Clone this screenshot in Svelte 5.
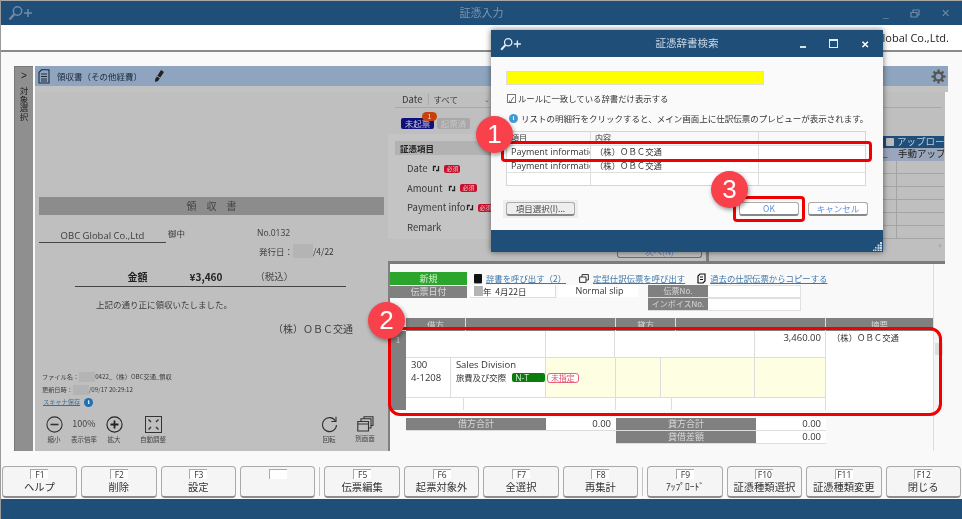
<script>
  const fkeys = [
    { key: 'F1', label: 'ヘルプ' },
    { key: 'F2', label: '削除' },
    { key: 'F3', label: '設定' },
    { key: '', label: '', gapAfter: true },
    { key: 'F5', label: '伝票編集' },
    { key: 'F6', label: '起票対象外' },
    { key: 'F7', label: '全選択' },
    { key: 'F8', label: '再集計', gapAfter: true },
    { key: 'F9', label: 'ｱｯﾌﾟﾛｰﾄﾞ' },
    { key: 'F10', label: '証憑種類選択' },
    { key: 'F11', label: '証憑種類変更' },
    { key: 'F12', label: '閉じる' },
  ]

  const fields = [
    { name: 'Date', gap: 5 },
    { name: 'Amount', gap: 6 },
    { name: 'Payment info', gap: 0 },
    { name: 'Remark' },
  ]

  const gridRows = [0, 1, 2, 3, 4, 5]
</script>

{#snippet logo(size)}
  <svg class="logo" width={size * 1.75} height={size} viewBox="0 0 28 16" fill="none" stroke="currentColor">
    <circle cx="10.5" cy="6" r="4.2" stroke-width="1.5" />
    <path d="M7.5 9 L2.5 14.5" stroke-width="2.4" />
    <path d="M17 8 H25 M21 4 V12" stroke-width="1.5" />
  </svg>
{/snippet}

{#snippet cycle()}
  <svg class="cycle" width="8" height="7" viewBox="0 0 8 7" fill="none" stroke="#222" stroke-width="1.3">
    <path d="M1.5 6 V1.5 H4 M6.5 1 V5.5 H4" />
  </svg>
{/snippet}

<div class="app">
  <header class="titlebar">
    <span class="title-logo">{@render logo(16)}</span>
    <span class="title-text">証憑入力</span>
    <div class="winctl">
      <span>_</span>
      <svg width="10" height="9" viewBox="0 0 10 9" fill="none" stroke="#6f8ba6" stroke-width="1.2"><path d="M1 3.5 H7 V8 H1 Z M3 3.5 V1 H9 V6 H7" /></svg>
      <span class="x">✕</span>
    </div>
  </header>

  <div class="company">OBC Global Co.,Ltd.</div>

  <main class="main">
    <section class="panel">
      <aside class="rail">
        <span class="chev">&gt;</span>
        <span class="rail-text">対象選択</span>
      </aside>

      <div class="work">
        <div class="work-head">
          <svg width="12" height="15" viewBox="0 0 12 15" fill="none" stroke="#1c2a3a" stroke-width="1.1">
            <path d="M3.5 .8 H11 V14 H1 V3.5 Z M3 5 H9 M3 7.5 H9 M3 10 H9 M3 12 H9" />
          </svg>
          <span class="doc-name">領収書（その他経費）</span>
          <svg class="pencil" width="11" height="14" viewBox="0 0 11 14">
            <path d="M7 1 L10 3 L4 12 L1 13 L1.2 10 Z" fill="#222" />
            <path d="M3 7 L7 9.5" stroke="#8ea4bf" stroke-width="1" />
          </svg>
          <svg class="gear" width="15" height="15" viewBox="0 0 16 16">
            <circle cx="8" cy="8" r="4.2" fill="none" stroke="#555" stroke-width="2.4" />
            <path d="M8 .5 V3.5 M8 12.5 V15.5 M.5 8 H3.5 M12.5 8 H15.5 M2.7 2.7 L4.8 4.8 M11.2 11.2 L13.3 13.3 M13.3 2.7 L11.2 4.8 M4.8 11.2 L2.7 13.3" stroke="#555" stroke-width="2.4" />
          </svg>
        </div>
        <div class="work-strip"></div>

        <div class="split">
          <!-- scanned receipt -->
          <div class="receipt">
            <div class="receipt-title">領　収　書</div>
            <div class="receipt-to">
              <span class="to-name">OBC Global Co.,Ltd</span>
              <span class="to-suffix">御中</span>
              <span class="to-no">No.0132</span>
            </div>
            <div class="receipt-date">発行日：<i class="redact w20"></i>/4/22</div>
            <div class="amount">
              <b>金額</b><b>¥3,460</b><span>（税込）</span>
            </div>
            <p class="received">上記の通り正に領収いたしました。</p>
            <p class="issuer">（株）ＯＢＣ交通</p>
            <div class="fileinfo">
              <div>ファイル名：<i class="redact w16"></i>0422_（株）OBC交通_領収</div>
              <div>更新日時：<i class="redact w16"></i>/09/17 20:29:12</div>
              <div class="scan"><u>スキャナ保存</u> <span class="info small">i</span></div>
            </div>
            <div class="tools">
              <div class="tool">
                <svg width="17" height="17" viewBox="0 0 17 17" fill="none" stroke="#333" stroke-width="1.1"><circle cx="8.5" cy="8.5" r="7.6" /><path d="M4.5 8.5 H12.5" stroke-width="1.6" /></svg>
                <span>縮小</span>
              </div>
              <div class="tool rate"><em>100%</em><span>表示倍率</span></div>
              <div class="tool">
                <svg width="17" height="17" viewBox="0 0 17 17" fill="none" stroke="#222" stroke-width="1.1"><circle cx="8.5" cy="8.5" r="7.6" /><path d="M4.5 8.5 H12.5 M8.5 4.5 V12.5" stroke-width="1.8" /></svg>
                <span>拡大</span>
              </div>
              <div class="tool auto">
                <svg width="17" height="17" viewBox="0 0 17 17" fill="none" stroke="#333" stroke-width="1"><rect x=".5" y=".5" width="16" height="16" /><path d="M6 6 L3.500 3.500 M11 6 L13.500 3.500 M6 11 L3.500 13.500 M11 11 L13.500 13.500" stroke-width="1.4" /></svg>
                <span>自動調整</span>
              </div>
              <div class="tool rotate">
                <svg width="17" height="17" viewBox="0 0 17 17" fill="none" stroke="#333" stroke-width="1.1"><path d="M14.5 5 A7 7 0 1 0 15.5 9" /><path d="M15 .8 V5.5 H10.3" /></svg>
                <span>回転</span>
              </div>
              <div class="tool other">
                <svg width="17" height="16" viewBox="0 0 17 16" fill="none" stroke="#333" stroke-width="1.1"><path d="M.8 5.5 H11.5 V15 H.8 Z M.8 8 H11.5 M4 5.5 V2.8 H14 V12 H11.5 M7 2.8 V.8 H16 V9.5 H14" /></svg>
                <span>別画面</span>
              </div>
            </div>
          </div>

          <div class="right">
            <!-- upper area sits behind the dialog -->
            <div class="upper">
              <div class="filter">
                <span class="filter-label">Date</span>
                <span class="filter-sel">すべて</span>
                <span class="filter-arrow">⌄</span>
              </div>
              <div class="states">
                <span class="state on">未起票<b class="count">1</b></span>
                <span class="state off">起票済</span>
              </div>
              <div class="voucher">
                <div class="voucher-head">証憑項目</div>
                {#each fields as f}
                  <div class="field">
                    <span>{f.name}</span>
                    {#if f.gap !== undefined}
                      <span class="field-tags" style="margin-left: {f.gap}px">{@render cycle()}<b class="must">必須</b></span>
                    {/if}
                  </div>
                {/each}
              </div>
              <div class="next-row"><span class="next">次へ(N)</span><span class="next-split"></span></div>
              <div class="upload">
                <div class="up-head"><i class="up-drop"></i><span>アップロー</span></div>
                <div class="up-sel"><span>_</span><span>手動アップ</span></div>
                {#each gridRows as r}
                  <div class="up-row"><span></span><span></span></div>
                {/each}
                <div class="up-foot">›</div>
              </div>
            </div>

            <!-- journal slip -->
            <div class="lower">
              <div class="slip-top">
                <div class="slip-kind">
                  <div class="new">新規</div>
                  <div class="hd">伝票日付</div>
                </div>
                <div class="slip-mid">
                  <div class="links">
                    <span class="book"></span><a href="#dict">辞書を呼び出す（2）</a>
                    <svg width="10" height="9" viewBox="0 0 10 9" fill="none" stroke="#333" stroke-width="1"><path d="M.6 3 H7 V8.4 H.6 Z M3 3 V.6 H9.4 V6 H7" /></svg>
                    <a href="#teikei">定型仕訳伝票を呼び出す</a>
                    <svg width="9" height="11" viewBox="0 0 9 11" fill="none" stroke="#111" stroke-width="1.2"><path d="M3 1 H8 V8 L6 10 H1 V3 Z M3 4 H6 M3 6.5 H6" /></svg>
                    <a href="#copy">過去の仕訳伝票からコピーする</a>
                  </div>
                  <div class="slip-fields">
                    <div class="datebox"><i class="redact w9"></i>年&nbsp; 4月22日</div>
                    <div class="normal">Normal slip</div>
                    <div class="numbers">
                      <span class="hd">伝票No.</span><span class="val"></span>
                      <span class="hd">インボイスNo.</span><span class="val"></span>
                    </div>
                  </div>
                </div>
              </div>

              <div class="journal">
                <div class="j-head">
                  <span class="a">借方</span><span class="b"></span>
                  <span class="a">貸方</span><span class="b"></span>
                  <span class="c">摘要</span>
                </div>
                <div class="j-body">
                  <div class="j-no">1</div>
                  <div class="j-rows">
                    <div class="r1">
                      <span class="w140"></span><span class="w70"></span><span class="w140"></span>
                      <span class="w70 num">3,460.00</span>
                    </div>
                    <div class="r2">
                      <span class="code"><span>300</span><span>4-1208</span></span>
                      <span class="acct">
                        <span>Sales Division</span>
                        <span class="acct-line">旅費及び交際<b class="nt">N-T</b></span>
                      </span>
                      <span class="y w70"><b class="unset">未指定</b></span>
                      <span class="y w45"></span><span class="y w95"></span><span class="y w70"></span>
                    </div>
                    <div class="r3">
                      <span class="w58"></span><span class="w152"></span><span class="w57"></span><span class="w153"></span>
                    </div>
                  </div>
                  <div class="j-remark">（株）ＯＢＣ交通</div>
                  <div class="j-scroll"><span>⌃</span><i></i><span>⌄</span></div>
                </div>
              </div>

              <div class="totals">
                <div class="t-row">
                  <span class="hd t140">借方合計</span><span class="val t70">0.00</span>
                  <span class="hd t140">貸方合計</span><span class="val t70">0.00</span>
                </div>
                <div class="t-row second">
                  <span class="hd t140">貸借差額</span><span class="val t70">0.00</span>
                </div>
              </div>
            </div>
          </div>
        </div>
      </div>
    </section>
  </main>

  <nav class="fkeys">
    {#each fkeys as k}
      <button class="fkey">
        <span class="key-tag">{k.key}</span>
        <span class="key-label" class:narrow={k.key === 'F9'}>{k.label}</span>
      </button>
      {#if k.gapAfter}<i class="key-sep"></i>{/if}
    {/each}
  </nav>
  <footer class="statusbar"></footer>

  <!-- modal dialog over the window -->
  <div class="dialog">
    <div class="dlg-title">
      <span class="dlg-logo">{@render logo(14)}</span>
      <span class="dlg-text">証憑辞書検索</span>
      <div class="dlg-ctl">
        <span class="min"></span><span class="max"></span><span class="close">✕</span>
      </div>
    </div>
    <div class="dlg-body">
      <div class="yellow"></div>
      <label class="check"><span class="box">✓</span>ルールに一致している辞書だけ表示する</label>
      <div class="hint"><span class="info">i</span>リストの明細行をクリックすると、メイン画面上に仕訳伝票のプレビューが表示されます。</div>
      <div class="dict">
        <div class="dict-row head"><span>項目</span><span>内容</span><span></span></div>
        <div class="dict-row"><span class="clip">Payment information</span><span>（株）ＯＢＣ交通</span><span></span></div>
        <div class="dict-row"><span class="clip">Payment information</span><span>（株）ＯＢＣ交通</span><span></span></div>
        <div class="dict-row"><span></span><span></span><span></span></div>
      </div>
      <div class="dlg-actions">
        <div class="pick-wrap"><button class="btn pick">項目選択(I)...</button></div>
        <button class="btn act ok">OK</button>
        <button class="btn act">キャンセル</button>
      </div>
    </div>
    <div class="dlg-foot">
      <svg width="9" height="9" viewBox="0 0 9 9" fill="#c9d6e2"><path d="M7 0h2v2H7zM4.500 2.500h2v2h-2zM7 2.500h2v2H7zM2 5h1.500v1.500H2zM4.500 5h2v2h-2zM7 5h2v2H7zM0 7.500h1.500V9H0zM2 7.500h1.500V9H2zM4.500 7.500h2V9h-2zM7 7.500h2V9H7z" /></svg>
    </div>
  </div>

  <!-- annotations -->
  <i class="mark m1"></i>
  <i class="mark m2"></i>
  <i class="mark m3"></i>
  <span class="dot d1">1</span>
  <span class="dot d2">2</span>
  <span class="dot d3">3</span>
</div>

<style>
  :global(body) { margin: 0; }

  .app {
    position: relative;
    width: 962px;
    height: 519px;
    display: flex;
    flex-direction: column;
    overflow: hidden;
    background: #f9f9f9;
    color: #333;
    font-family: "Noto Sans CJK JP", "Noto Sans", sans-serif;
    font-size: 8.5px;
    line-height: 1.2;
    box-sizing: border-box;
    border-left: 1px solid #9a9a9a;
    filter: blur(0.3px);
  }

  /* window chrome */
  .titlebar {
    flex: none;
    height: 24px;
    border-top: 1px solid #a8a8a8;
    background: #1f4e79;
    display: grid;
    grid-template-columns: 1fr auto 1fr;
    align-items: center;
    color: #6f8ba6;
  }

  .title-logo { padding-left: 6px; display: flex; }
  .title-text { font-size: 11px; color: #7d96ae; }

  .winctl {
    justify-self: end;
    display: flex;
    align-items: center;
    gap: 21px;
    padding-right: 12px;
    font-size: 11px;
    color: #6f8ba6;
  }

  .company {
    flex: none;
    height: 25px;
    background: #fff;
    border-bottom: 2px solid #8a8a8a;
    display: flex;
    align-items: center;
    justify-content: flex-end;
    padding-right: 13px;
    font-size: 11px;
    color: #222;
    font-family: "Open Sans", sans-serif;
  }

  .main {
    flex: none;
    height: 413px;
    box-sizing: border-box;
    padding: 14px 14px 0 13px;
  }

  .panel {
    height: 385px;
    display: grid;
    grid-template-columns: 19px 1fr;
    gap: 2px;
  }

  .rail {
    background: #8f8f8f;
    border-left: 1px solid #777;
    border-top: 1px solid #777;
    display: flex;
    flex-direction: column;
    align-items: center;
    color: #222;
  }

  .chev { margin-top: 3px; font: 400 10px/12px "Liberation Sans", sans-serif; }

  .rail-text {
    margin-top: 5px;
    writing-mode: vertical-rl;
    font-size: 8.5px;
  }

  .work { display: flex; flex-direction: column; min-width: 0; }

  .work-head {
    flex: none;
    height: 20px;
    background: #8ea4bf;
    display: flex;
    align-items: center;
    padding-left: 3px;
    color: #1c2a3a;
  }

  .doc-name { margin-left: 7px; font-size: 8.5px; }
  .pencil { margin-left: 12px; }
  .gear { margin-left: auto; margin-right: 2px; }

  .work-strip { flex: none; height: 6px; background: #c2c2c2; }

  .split {
    flex: 1;
    display: grid;
    grid-template-columns: 353px 1fr;
    min-height: 0;
  }

  /* receipt preview */
  .receipt {
    background: #bfbfbf;
    border-right: 2px solid #808080;
    padding-top: 105px;
    display: flex;
    flex-direction: column;
    color: #3c3c3c;
    box-sizing: border-box;
    width: 355px;
  }

  .receipt-title {
    margin: 0 4px;
    height: 18px;
    background: #8c8c8c;
    text-align: center;
    line-height: 17px;
    font-size: 10px;
    color: #444;
  }

  .receipt-to {
    margin: 10px 0 0 4px;
    display: flex;
    align-items: flex-end;
    height: 18px;
  }

  .to-name {
    width: 127px;
    height: 18px;
    padding-top: 4px;
    border-bottom: 1px solid #444;
    box-sizing: border-box;
    text-align: center;
    font-size: 9.5px;
    line-height: 13px;
    font-family: "Open Sans", sans-serif;
  }

  .to-suffix { margin: 3px 0 0 2px; align-self: flex-start; font-size: 8.5px; }
  .to-no { margin: 3px 0 0 72px; align-self: flex-start; font-size: 8.5px; font-family: "Open Sans", sans-serif; }

  .receipt-date { margin: 0 0 0 224px; height: 16px; display: flex; align-items: center; font-size: 8.5px; }

  .redact { display: inline-block; height: 100%; min-height: 10px; background: #b4b4b4; }
  .w20 { width: 20px; height: 14px; }
  .w16 { width: 16px; height: 10px; }
  .w9 { width: 9px; height: 9px; }

  .amount {
    margin: 9px 0 0 40px;
    width: 271px;
    height: 19px;
    padding-top: 3px;
    border-bottom: 1px solid #444;
    display: flex;
    justify-content: center;
    gap: 42px;
    font-size: 10px;
    color: #222;
    box-sizing: border-box;
  }

  .amount span { color: #444; font-size: 9.5px; margin-left: -9px; }

  .received { margin: 12px 0 0 61px; font-size: 8.5px; }
  .issuer { margin: 14px 0 0 238px; font-size: 10px; }

  .fileinfo {
    margin: 36px 0 0 7px;
    font-size: 6.2px;
    line-height: 12.4px;
    color: #3a3a3a;
  }

  .fileinfo > div { display: flex; align-items: center; height: 12.4px; }
  .scan u { color: #3f6f98; }
  .scan { gap: 4px; margin-left: 1px; }

  .info {
    flex: none;
    width: 9px;
    height: 9px;
    border-radius: 50%;
    background: #3f9bd6;
    color: #fff;
    font: 700 7px/9px "Liberation Serif", serif;
    text-align: center;
  }

  .info.small { background: #1f6fb4; }

  .tools {
    margin: 8px 0 0 4px;
    display: flex;
    color: #444;
  }

  .tool {
    flex: none;
    display: flex;
    flex-direction: column;
    align-items: center;
    gap: 3px;
    width: 30px;
    font-size: 6.5px;
    white-space: nowrap;
  }

  .tool.rate { justify-content: flex-end; }
  .tool.rate em { font-style: normal; font-size: 9px; height: 17px; line-height: 16px; }
  .tool.auto { margin-left: 9px; }
  .tool.rotate { margin-left: 146px; }
  .tool.other { margin-left: 6px; }

  /* right column */
  .right { display: flex; flex-direction: column; min-width: 0; }

  .upper {
    position: relative;
    height: 172px;
    background: #bfbfbf;
    border-bottom: 3px solid #7c7c7c;
    box-sizing: border-box;
    padding: 0 0 0 7px;
    color: #3a3a3a;
    width: 557px;
  }

  .filter {
    display: flex;
    align-items: center;
    height: 16px;
    width: 547px;
    border-bottom: 1px solid #a9a9a9;
    padding-left: 7px;
    box-sizing: border-box;
    font-size: 9.5px;
  }

  .filter-sel {
    margin-left: 6px;
    font-size: 8.5px;
    border-left: 1px solid #a9a9a9;
    padding-left: 4px;
  }

  .filter-arrow { margin-left: 26px; font-size: 7px; color: #666; }

  .states { display: flex; gap: 3px; margin: 10px 0 0 6px; }

  .state {
    position: relative;
    width: 33px;
    height: 11px;
    line-height: 11px;
    text-align: center;
    font-size: 8.5px;
    border-radius: 2px;
  }

  .state.on { background: #10107a; color: #c8c8dc; }
  .state.off { background: #a8a8a8; color: #c6c6c6; }

  .count {
    position: absolute;
    top: -6px;
    right: -3px;
    width: 15px;
    height: 9px;
    border-radius: 5px;
    background: #c8400c;
    color: #eee;
    font-size: 6px;
    line-height: 9px;
    font-weight: 400;
  }

  .voucher {
    margin: 5px 0 0 -7px;
    width: 114px;
    height: 105px;
    background: #c4c4c4;
    padding: 7px 0 0 0;
    box-sizing: border-box;
  }

  .voucher-head {
    margin: 0 0 4px 7px;
    height: 14px;
    line-height: 14px;
    padding-left: 5px;
    background: #b2b2b2;
    font-weight: 700;
    font-size: 8.5px;
    color: #222;
  }

  .field {
    display: flex;
    align-items: center;
    height: 19.6px;
    padding-left: 19px;
    font-size: 9.5px;
    white-space: nowrap;
  }

  .field-tags { display: inline-flex; align-items: center; gap: 4px; }
  .cycle { flex: none; }

  .must {
    padding: 0 2px;
    border-radius: 2px;
    background: #c8102e;
    color: #e8c0c0;
    font-size: 6px;
    line-height: 8px;
    font-weight: 400;
  }

  .next-row {
    position: absolute;
    left: 0;
    right: 0;
    bottom: 0;
    height: 13px;
    display: flex;
  }

  .next {
    margin-left: 229px;
    width: 85px;
    height: 10px;
    border: 1px solid #6f6f6f;
    border-top: 0;
    border-radius: 0 0 3px 3px;
    text-align: center;
    color: #5a82b8;
    line-height: 7px;
    box-sizing: border-box;
  }

  .next-split { margin-left: 4px; width: 3px; background: #7c7c7c; }

  .upload {
    position: absolute;
    top: 44px;
    left: 495px;
    width: 61px;
    color: #222;
    font-size: 8.5px;
  }

  .up-head {
    display: flex;
    height: 12px;
    background: #1f4e79;
    color: #c0cedb;
    align-items: center;
    padding-left: 3px;
    gap: 3px;
    white-space: nowrap;
    overflow: hidden;
    font-size: 9.5px;
  }

  .up-drop { flex: none; width: 8px; height: 8px; background: #bbb; border-radius: 1px; }

  .up-sel, .up-row {
    display: grid;
    grid-template-columns: 13px 1fr;
    height: 13px;
    overflow: hidden;
    white-space: nowrap;
  }

  .up-sel { background: #9aa6bb; }
  .up-sel span + span { padding-left: 2px; font-size: 9.5px; }
  .up-row { border-bottom: 1px solid #a4a4a4; box-sizing: border-box; }
  .up-row span + span { border-left: 1px solid #a4a4a4; }
  .up-foot { height: 10px; text-align: right; padding-right: 3px; color: #888; line-height: 10px; }

  /* journal slip */
  .lower { flex: 1; padding-top: 8px; width: 546px; border-right: 1px solid #ddd; box-sizing: border-box; height: 186px; }

  .hd {
    display: flex;
    align-items: center;
    justify-content: center;
    background: #808080;
    color: #d8d8d8;
    box-sizing: border-box;
    font-size: 9px;
  }

  .val {
    display: flex;
    align-items: center;
    justify-content: flex-end;
    background: #fff;
    padding-right: 5px;
    box-sizing: border-box;
    color: #333;
    font-family: "Open Sans", sans-serif;
    font-size: 9.5px;
  }

  .slip-top { display: flex; margin-left: 2px; }

  .slip-kind { width: 77px; }
  .new { height: 13px; background: #2ca52c; color: #d5f0d5; text-align: center; line-height: 13px; font-size: 9px; }
  .slip-kind .hd { height: 12px; margin-top: 1px; }

  .slip-mid { margin-left: 7px; }

  .links {
    display: flex;
    align-items: center;
    height: 13px;
    gap: 4px;
    font-size: 8.4px;
    white-space: nowrap;
  }

  .links a { color: #3d77ab; margin-right: 8px; }
  .links a:first-of-type { margin-right: 9px; }
  .book { width: 8px; height: 9px; background: #111; border-radius: 1px; box-shadow: 0 1px 0 #999; }

  .slip-fields { display: flex; margin: 0 0 0 -4px; }

  .datebox {
    width: 86px;
    height: 13px;
    display: flex;
    align-items: center;
    background: #fff;
    border-right: 1px solid #ddd;
    border-bottom: 1px solid #ddd;
    padding-left: 4px;
    box-sizing: border-box;
    font-size: 8.5px;
  }

  .normal {
    width: 80px;
    margin-left: 2px;
    height: 12px;
    background: #fff;
    text-align: center;
    font-family: "Open Sans", sans-serif;
    font-size: 9px;
    line-height: 12px;
    padding-left: 3px;
    box-sizing: border-box;
  }

  .numbers {
    margin-left: 10px;
    display: grid;
    grid-template-columns: 60px 93px;
    grid-auto-rows: 13px;
  }

  .numbers .hd { border-bottom: 1px solid #ddd; font-size: 8px; white-space: nowrap; }
  .numbers .val { border: 1px solid #e0e0e0; border-left: 0; }

  .journal { margin: 7px 0 0 18px; }

  .j-head {
    display: grid;
    grid-template-columns: 60px 150px 60px 150px 108px;
    height: 12px;
  }

  .j-head span {
    background: #808080;
    color: #d8d8d8;
    border-right: 1px solid #ddd;
    text-align: center;
    font-size: 8.5px;
    line-height: 13px;
    height: 13px;
    overflow: hidden;
    box-sizing: border-box;
  }

  .j-body {
    position: relative;
    display: grid;
    grid-template-columns: 420px 108px 10px;
    margin-top: 1px;
    height: 79px;
    background: #fff;
  }

  .j-no {
    position: absolute;
    left: -16px;
    top: 0;
    bottom: 0;
    width: 16px;
    background: #808080;
    color: #ccc;
    font-size: 8px;
    text-align: center;
    padding-top: 4px;
    box-sizing: border-box;
  }

  .j-rows { display: flex; flex-direction: column; border-right: 1px solid #ddd; }
  .j-rows > div { display: flex; border-bottom: 1px solid #ddd; box-sizing: border-box; }
  .j-rows span { display: block; box-sizing: border-box; }
  .j-rows > div > span { border-right: 1px solid #ddd; }
  .j-rows > div > span:last-child { border-right: 0; }

  .r1 { height: 27px; }
  .r2 { height: 40px; }
  .r3 { height: 12px; border-bottom: 0 !important; }

  .w140 { width: 140px; }
  .w70 { width: 70px; }
  .w45 { width: 45px; }
  .w95 { width: 95px; }
  .w58 { width: 58px; }
  .w152 { width: 152px; }
  .w57 { width: 57px; }
  .w153 { width: 153px; }

  .num {
    text-align: right;
    padding: 1px 4px 0 0;
    font-family: "Open Sans", sans-serif;
    font-size: 9.5px;
  }

  .code, .acct {
    font-family: "Open Sans", "Noto Sans CJK JP", sans-serif;
    font-size: 9.5px;
    line-height: 13px;
    padding: 0 0 0 5px;
  }

  .code { width: 45px; }
  .acct { width: 95px; white-space: nowrap; }
  .acct-line { display: flex !important; align-items: center; font-family: "Noto Sans CJK JP", sans-serif; font-size: 8.4px; }

  .nt {
    margin-left: 6px;
    width: 33px;
    height: 9px;
    line-height: 9px;
    padding-left: 3px;
    box-sizing: border-box;
    border-radius: 2px;
    background: #0a7d0a;
    color: #d6ecd6;
    font-weight: 400;
    font-size: 8.5px;
    font-family: "Open Sans", sans-serif;
  }

  .y { background: #fefee2; }
  .unset {
    display: block;
    width: 32px;
    margin: 15px 0 0 1px;
    border: 1px solid #e8607a;
    border-radius: 3px;
    background: #fff;
    color: #e0506a;
    font-size: 8px;
    font-weight: 400;
    line-height: 8px;
    text-align: center;
    box-sizing: border-box;
  }

  .j-remark { padding: 1px 0 0 6px; font-size: 8.4px; }

  .j-scroll {
    display: flex;
    flex-direction: column;
    align-items: center;
    background: #f4f4f4;
    color: #aaa;
    font-size: 7px;
    line-height: 11px;
  }

  .j-scroll i { display: block; width: 8px; height: 12px; background: #ddd; margin-top: 1px; }
  .j-scroll span:last-child { margin-top: auto; }

  .totals { margin: 8px 0 0 18px; }
  .t-row { display: flex; height: 13px; }
  .t-row.second { margin-left: 210px; }
  .t140 { width: 140px; border-bottom: 1px solid #ddd; }
  .t70 { width: 70px; border-bottom: 1px solid #ddd; }

  /* function keys */
  .fkeys {
    flex: none;
    margin-top: 1px;
    height: 33px;
    display: flex;
    align-items: flex-start;
    gap: 4px;
    padding-left: 0.7px;
  }

  .fkey {
    flex: none;
    width: 75.450px;
    height: 32px;
    padding: 2px 0 0;
    display: flex;
    flex-direction: column;
    align-items: center;
    background: #f5f5f5;
    border: 1px solid #aaa;
    border-bottom: 2px solid #8c8c8c;
    border-radius: 4px;
    box-sizing: border-box;
    font-family: inherit;
    color: #333;
  }

  .key-tag {
    width: 18px;
    height: 10px;
    border-top: 1px solid #aaa;
    border-left: 1px solid #aaa;
    background: #fff;
    font-size: 8.5px;
    line-height: 9px;
    text-align: center;
    box-sizing: border-box;
    font-family: "Open Sans", sans-serif;
  }

  .key-label { font-size: 10.3px; line-height: 15px; white-space: nowrap; }
  .key-label.narrow { font-size: 9.5px; }

  .key-sep { flex: none; width: 1px; height: 29px; margin-top: 1px; background: #c4c4c4; }

  .statusbar { flex: 1; background: #1f4e79; }

  /* dialog */
  .dialog {
    position: absolute;
    left: 490px;
    top: 30px;
    width: 392px;
    height: 222px;
    display: flex;
    flex-direction: column;
    background: #fff;
    box-shadow: 0 0 6px rgba(0, 0, 0, 0.55);
  }

  .dlg-title {
    flex: none;
    height: 27px;
    background: #1f4e79;
    display: grid;
    grid-template-columns: 1fr auto 1fr;
    align-items: center;
    color: #e4ebf2;
  }

  .dlg-logo { padding-left: 8px; display: flex; }
  .dlg-text { font-size: 10.5px; color: #ccd8e3; }

  .dlg-ctl { justify-self: end; display: flex; align-items: center; gap: 23px; padding-right: 14px; color: #fff; }
  .min { width: 6px; height: 2px; background: #d8e0e8; margin-top: 6px; }
  .max { width: 7px; height: 6px; border: 1px solid #e6ecf2; border-top-width: 2px; }
  .close { font-size: 10px; font-weight: 700; }

  .dlg-body {
    flex: 1;
    background: #fafafa;
    padding: 14px 15px 0;
    display: flex;
    flex-direction: column;
    color: #333;
  }

  .yellow {
    width: 258px;
    height: 14px;
    background: #ffff00;
    border: 1px solid #ddd;
    box-sizing: border-box;
  }

  .check { display: flex; align-items: center; margin-top: 7px; font-size: 8.4px; height: 12px; }

  .box {
    width: 9px;
    height: 9px;
    border: 1px solid #777;
    margin: 0 2px 0 1px;
    font-size: 8px;
    line-height: 9px;
    text-align: center;
    box-sizing: border-box;
    background: #fff;
  }

  .hint {
    display: flex;
    align-items: center;
    gap: 3px;
    margin: 8px 0 0 3px;
    font-size: 8.5px;
    height: 12px;
    white-space: nowrap;
  }

  .dict { margin-top: 7px; width: 360px; border: 1px solid #d6d6d6; box-sizing: border-box; background: #fff; }

  .dict-row {
    display: grid;
    grid-template-columns: 84px 168px 1fr;
    height: 13.300px;
    border-top: 1px solid #e0e0e0;
    box-sizing: border-box;
    font-size: 8.4px;
    line-height: 11px;
  }

  .dict-row.head { border-top: 0; background: #f8f8f8; font-size: 8px; }
  .dict-row span { padding-left: 4px; border-right: 1px solid #ddd; overflow: hidden; white-space: nowrap; box-sizing: border-box; }
  .dict-row span:last-child { border-right: 0; }
  .clip { font-family: "Open Sans", sans-serif; font-size: 9px; }

  .dlg-actions { display: flex; align-items: center; margin: 14px 0 0 -3px; }
  .pick-wrap { background: #eee; padding: 2px 3px; }

  .btn {
    height: 14px;
    padding: 0;
    background: #fdfdfd;
    border: 1px solid #aaa;
    border-bottom: 2px solid #888;
    border-radius: 3px;
    font-family: inherit;
    font-size: 8.5px;
    line-height: 11px;
    box-sizing: border-box;
  }

  .pick { width: 69px; background: #eee; color: #444; display: block; }
  .act { width: 60px; color: #5a8fe0; background: #fff; margin-left: 9px; }
  .ok { margin-left: 161px; }

  .dlg-foot {
    flex: none;
    height: 22px;
    background: #1f4e79;
    display: flex;
    align-items: flex-end;
    justify-content: flex-end;
    padding: 0 1px 1px 0;
    box-sizing: border-box;
  }

  /* callouts */
  .mark {
    position: absolute;
    border: 3px solid #f00000;
    box-sizing: border-box;
    border-radius: 4px;
  }

  .m1 { left: 500px; top: 141px; width: 371px; height: 21px; }
  .m2 { left: 387px; top: 327px; width: 554px; height: 89px; border-radius: 12px; }
  .m3 { left: 732px; top: 196px; width: 72px; height: 26px; }

  .dot {
    position: absolute;
    width: 37px;
    height: 37px;
    border-radius: 50%;
    background: #f8414a;
    color: #fff;
    font: 400 26px/37px "Liberation Sans", sans-serif;
    text-align: center;
    box-shadow: 1px 2px 4px rgba(0, 0, 0, 0.4);
  }

  .d1 { left: 475px; top: 116px; }
  .d2 { left: 367px; top: 302px; }
  .d3 { left: 710px; top: 171px; }
</style>
